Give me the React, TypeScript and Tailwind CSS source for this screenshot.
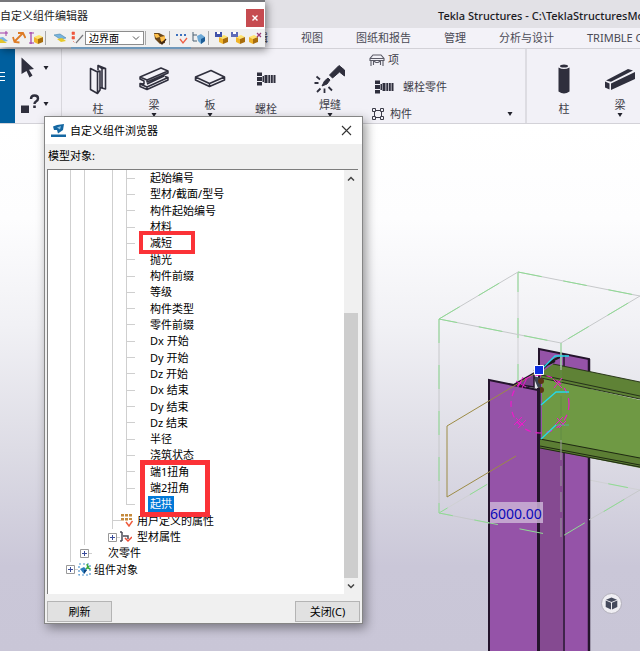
import React from "react";

const FONT = "font-['Noto_Sans','Noto_Sans_CJK_SC',sans-serif]";

/* ---------- ribbon icons ---------- */

const ColumnIcon = () => (
  <svg width="18" height="31" viewBox="0 0 18 31" fill="none" stroke="#2f2f3d" strokeWidth="1.600" strokeLinejoin="round">
    <path d="M1.500 4.500 L8.500 8 V29.500 L1.500 25.500 Z M8.500 8 L11 7 V26 L8.500 29.500 M9 6.500 V1.500 L16.500 4.500 V25 L11 23.500 M9 1.500 L13 4.500 L16.500 4.500 M13 4.500 V23.500" />
  </svg>
);

const BeamIcon = () => (
  <svg width="30" height="24" viewBox="0 0 30 24" fill="none" stroke="#2f2f3d" strokeWidth="1.500" strokeLinejoin="round">
    <path d="M1 10 L22 1 L29 4 L8 13 Z M1 10 V12 L5 14 V17 L1 16.500 V19.500 L8 22.500 L29 13 V10.500 L26 9.500 M8 13 V15 L29 6 V4 M8 22.500 V20 L29 10.500 M1 17 L8 20 M8 17 L25 9 V8" />
  </svg>
);

const PlateIcon = () => (
  <svg width="32" height="20" viewBox="0 0 32 20" fill="none" stroke="#2f2f3d" strokeWidth="1.600" strokeLinejoin="round">
    <path d="M1.500 8 L17 1.500 L30.500 8 L15.500 14.500 Z M1.500 8 V11 L15.500 17.500 L30.500 11 V8 M15.500 14.500 V17.500" />
  </svg>
);

const BoltIcon = () => (
  <svg width="20" height="14" viewBox="0 0 20 14" fill="#2f2f3d">
    <path d="M1 0.500h5v3.500H1z M1 5h5v4H1z M1 10h5v3.500H1z M6.500 4h1.500v6h-1.500z M8.500 3h3v8h-3z M12.300 3h2v8h-2z M15 3h1.800v8H15z M17.500 3h2v8h-2z" />
  </svg>
);

const WeldIcon = () => (
  <svg width="32" height="30" viewBox="0 0 32 30" fill="#2f2f3d" stroke="#2f2f3d">
    <path d="M15.500 11 L25 1.500 L30.500 6 V12 L25.500 8 L18.500 14 Z" strokeWidth="1" />
    <path d="M8 22 L10.500 17 L14 14 L16 16 L13 20 Z" strokeWidth="1" />
    <path d="M0.500 19 H4.500 M2.500 12.500 L6 15.500 M3 28 L6.500 24.500 M10.500 24.500 V29 M14.500 23 L18 26.500" strokeWidth="1.800" fill="none" />
  </svg>
);

const ItemIcon = () => (
  <svg width="16" height="13" viewBox="0 0 16 13" fill="none" stroke="#5a5a66" strokeWidth="1.100">
    <path d="M4 1 H12 L15 4.500 V6.500 H1 V4.500 Z M1 4.500 H15 M2 6.500 V12 M4.500 6.500 V11 M11.500 6.500 V11 M14 6.500 V12 M4.500 7 L7 8.500 H9 L11.500 7" />
  </svg>
);

const AssemblyIcon = () => (
  <svg width="12" height="12" viewBox="0 0 12 12" fill="none" stroke="#3c3c49">
    <path d="M.5 .5h3v3h-3z M8.500 .5h3v3h-3z M.5 8.500h3v3h-3z M8.500 8.500h3v3h-3z M4 2.500h4 M4 9.500h4 M2.500 4v4 M9.500 4v4" />
  </svg>
);

const ConcreteColumnIcon = () => (
  <svg width="14" height="32" viewBox="0 0 14 32" fill="#2f2f3d">
    <ellipse cx="7" cy="3" rx="4" ry="1.600" />
    <path d="M1.500 4.500 Q7 7.500 12.500 4.500 V28.500 Q7 32.500 1.500 28.500 Z" />
  </svg>
);

const ConcreteBeamIcon = () => (
  <svg width="32" height="24" viewBox="0 0 32 24" fill="#2f2f3d">
    <path d="M2 13.500 L24 2 L29 3.500 L7 14.800 Z M1 14.500 L5.500 16.500 V22.500 L1 20.500 Z M7 16.500 L31 5 V12 L7 23 Z" />
  </svg>
);

const Caret = () => (
  <svg width="6" height="4" viewBox="0 0 6 4" fill="#22222c">
    <path d="M0.500 0h5L3 4z" />
  </svg>
);

/* ---------- component editor toolbar icons ---------- */

const GoldCube = ({ x = 0 }: { x?: number }) => (
  <g transform={`translate(${x} 0)`}>
    <path d="M1 6 L6 4 L10 6 L5 8 Z" fill="#ffe36b" />
    <path d="M1 6 L5 8 V13 L1 11 Z" fill="#f0b429" />
    <path d="M5 8 L10 6 V11 L5 13 Z" fill="#a86d0c" />
  </g>
);

const Tool = ({ label, children }: { label: string; children: React.ReactNode }) => (
  <button type="button" aria-label={label} className="flex w-[17px] shrink-0 justify-center">
    <svg width="14" height="14" viewBox="0 0 14 14" fill="none">
      {children}
    </svg>
  </button>
);

const Separator = () => <span className="mx-px h-[14px] w-px shrink-0 bg-[#a8a8a8]" />;

function EditorToolbar() {
  return (
    <section className="absolute top-0 left-0 h-[47px] w-[265px] border-t-2 border-[#77777b] bg-white shadow-[2px_3px_8px_rgba(0,0,0,0.45)]">
      <header className="flex h-[27px] items-center justify-between pr-px">
        <h2 className="text-[11px] leading-4 text-[#222]">自定义组件编辑器</h2>
        <button type="button" aria-label="关闭编辑器" className="mt-1 flex h-[18px] w-[18px] items-center justify-center bg-[#c64b50]">
          <svg width="6" height="6" viewBox="0 0 6 6" stroke="#fff" strokeWidth="1.400">
            <path d="M0.500 0.500 L5.500 5.500 M5.500 0.500 L0.500 5.500" />
          </svg>
        </button>
      </header>
      <div className="flex h-[18px] items-center overflow-hidden bg-[#f0f0f0]">
        <div className="-ml-[7px] flex">
          <Tool label="固定平面">
            <path d="M0 2h13M11 0v5" stroke="#a03ca8" />
            <path d="M2 7l6-1 5 4-6 1z" fill="#78b4de" />
            <path d="M1 9l5-1 6 4H5z" fill="#e2c42d" />
          </Tool>
          <Tool label="添加距离">
            <path d="M2 11L11 2M1 6l1.500 5 5 .5M6 2h5l2.500 5" stroke="#dd7b25" strokeWidth="1.800" />
          </Tool>
          <Tool label="参考距离">
            <path d="M2 1v12M0 2h5M0 12h5" stroke="#a03ca8" strokeWidth="1.200" />
            <GoldCube x={4} />
          </Tool>
        </div>
        <Separator />
        <div className="ml-1 flex">
          <Tool label="工作平面">
            <path d="M1 4l6-1 6 4-6 1z" fill="#78b4de" stroke="#4586ad" strokeWidth=".6" />
            <path d="M4 8l5-1 4 3-5 1z" fill="#e7ca2a" />
          </Tool>
          <Tool label="自动绑定">
            <path d="M2 1h2.500v2.500H2zM2 5.500h2.500V8H2zM3 10l1.500 1.500" fill="#ef563c" stroke="#ef563c" strokeWidth=".6" />
            <path d="M6 12L13 4" stroke="#77777b" strokeWidth="1.200" />
          </Tool>
        </div>
        <div className="relative shrink-0">
          <select aria-label="平面类型" className="block h-[14px] w-[59px] appearance-none rounded-none border border-[#8d8d8d] bg-white pl-[3px] text-[10px] leading-3 text-black">
            <option>边界面</option>
          </select>
          <svg className="pointer-events-none absolute top-[5px] right-[4px]" width="8" height="5" viewBox="0 0 8 5" fill="none" stroke="#555">
            <path d="M1 0.500L4 3.500L7 0.500" />
          </svg>
        </div>
        <Separator />
        <div className="ml-[4px] flex">
          <Tool label="创建组件">
            <path d="M1 2h5l6 3v7l-5 1-5-5z" fill="#6b4718" />
            <path d="M1 3h4l2 3-4 1zM7 6l5-1v4l-4 2z" fill="#ffc04a" />
            <path d="M7 10l2 3 4-5" stroke="#3d2412" strokeWidth="1.300" />
          </Tool>
        </div>
        <Separator />
        <div className="ml-[2px] flex">
          <Tool label="显示变量">
            <path d="M1 3h2v2H1zM5 3h2v2H5zM9 3h2v2H9z" fill="#3c70bd" />
            <path d="M5 8l3 4 4-5" stroke="#ee6046" strokeWidth="1.300" />
          </Tool>
          <Tool label="组件浏览器">
            <path d="M1 1v9h4M1 4h4" stroke="#4b6172" />
            <path d="M5 5l4-2 4 3v4l-4 3-3-3z" fill="#6da9d6" />
            <path d="M9 8l4-2v4l-4 3z" fill="#1c5c96" />
          </Tool>
        </div>
        <Separator />
        <div className="ml-[2px] flex">
          <Tool label="保存组件">
            <GoldCube x={4} />
            <path d="M1 1h7v5H1z" fill="#4052a8" />
            <path d="M3 1h3v2H3z" fill="#fff" />
          </Tool>
          <Tool label="另存组件">
            <GoldCube x={4} />
            <path d="M0 1h7v5H0z" fill="#5e6cb8" />
            <path d="M2 1h3v2H2z" fill="#fff" />
          </Tool>
          <Tool label="关闭组件">
            <GoldCube />
            <path d="M9 2l4 4M13 2L9 6" stroke="#9a3a78" strokeWidth="1.200" />
          </Tool>
        </div>
      </div>
    </section>
  );
}

/* ---------- ribbon ---------- */

function RibbonButton({ label, icon, menu = false, wide = false }: { label: string; icon: React.ReactNode; menu?: boolean; wide?: boolean }) {
  return (
    <button type="button" className={`flex shrink-0 flex-col items-center pt-3 ${wide ? "w-[72px]" : "w-14"}`}>
      <span className="flex h-9 items-center">{icon}</span>
      <span className={`text-[11px] leading-4 text-[#3d3d48] ${menu ? "" : "pt-1"}`}>{label}</span>
      {menu && <Caret />}
    </button>
  );
}

function Ribbon() {
  return (
    <div className="flex h-[75px] shrink-0 overflow-hidden border-b border-[#d3d2d8] bg-[#f2f1f7]">
      <button type="button" aria-label="文件菜单" className="flex w-[15px] shrink-0 items-center bg-[#005f9e] pb-5">
        <svg width="5" height="10" viewBox="0 0 5 10" stroke="#fff">
          <path d="M0 1.500h5M0 5.500h5M0 9.500h5" />
        </svg>
      </button>
      <div className="flex w-[47px] shrink-0 flex-col gap-4 border-r border-[#d8d7dd] pt-2 pl-[6px]">
        <button type="button" aria-label="选择" className="flex items-center gap-2">
          <svg width="14" height="21" viewBox="0 0 14 21" fill="#2f2f3d">
            <path d="M0.500 0.500L13 12L8 12.800L11.500 18.500L8.500 20.500L5.500 14L0.500 17Z" />
          </svg>
          <Caret />
        </button>
        <button type="button" aria-label="查询" className="flex items-center gap-[3px]">
          <svg width="19" height="20" viewBox="0 0 19 20" fill="#2f2f3d">
            <path d="M0 11.500h8v7.500H0z" />
            <path d="M10 5Q10 1.500 13.500 1.500Q17 1.500 17 4.500Q17 6.500 15 7.500Q13.500 8.500 13.500 10" fill="none" stroke="#2f2f3d" strokeWidth="2.400" />
            <path d="M12.200 11.500h2.600v2.400h-2.600z" />
          </svg>
          <Caret />
        </button>
      </div>
      <div className="flex w-[465px] shrink-0 border-r-2 border-[#dddce2] pl-2">
        <RibbonButton label="柱" icon={<ColumnIcon />} />
        <RibbonButton label="梁" icon={<BeamIcon />} menu />
        <RibbonButton label="板" icon={<PlateIcon />} menu />
        <RibbonButton label="螺栓" icon={<BoltIcon />} />
        <RibbonButton label="焊缝" icon={<WeldIcon />} menu wide />
        <div className="flex flex-1 flex-col justify-between pt-[3px] pr-3 pb-px pl-[3px] text-[11px] leading-4 text-[#3d3d48]">
          <button type="button" className="flex items-center gap-[3px]">
            <ItemIcon />项
          </button>
          <button type="button" className="flex items-center gap-[9px] pl-[5px]">
            <BoltIcon />
            螺栓零件
          </button>
          <div className="flex items-center justify-between pl-[3px]">
            <button type="button" className="flex items-center gap-[6px]">
              <AssemblyIcon />
              构件
            </button>
            <button type="button" aria-label="更多">
              <Caret />
            </button>
          </div>
        </div>
      </div>
      <div className="flex pl-[9px]">
        <RibbonButton label="柱" icon={<ConcreteColumnIcon />} />
        <RibbonButton label="梁" icon={<ConcreteBeamIcon />} menu />
      </div>
    </div>
  );
}

/* ---------- 3D view ---------- */

function ModelView() {
  return (
    <main className="relative min-h-0 flex-1 overflow-hidden bg-[linear-gradient(#ffffff_0%,#fdfdfe_18%,#f1f1f5_38%,#dddce5_62%,#cac7d8_84%,#c9c6d7_100%)]">
      <svg className="block h-full w-full" viewBox="0 124 640 527" preserveAspectRatio="xMinYMin slice" fill="none">
        {/* work area box behind the model */}
        <path d="M518 272V466L439 513M518 466L640 490" stroke="#cfd0d3" />
        <path d="M518 272V466L439 513M518 466L640 490" stroke="#8fdc93" strokeDasharray="20 26" />

        {/* rear flange and web of the column */}
        <path d="M539 660V349L589 359V660Z" fill="#9553a8" stroke="#24142c" strokeWidth="2" />
        <path d="M540 440H563V651H540Z" fill="#854a91" />
        <path d="M564 354V651" stroke="#24142c" strokeWidth="1.500" />
        <path d="M589 359V651" stroke="#24142c" strokeWidth="2.500" />

        {/* beam */}
        <path d="M541 373L553 364L640 382V399L541 378Z" fill="#5f8236" />
        <path d="M553 364L640 382" stroke="#2c3a1c" strokeWidth="1.200" />
        <path d="M542 378L640 400V459L542 440Z" fill="#6f9944" />
        <path d="M541 375L640 396M541 378L640 399" stroke="#26331a" strokeWidth="1.200" />
        <path d="M540 439L640 458V468L540 448Z" fill="#5c7e34" />
        <path d="M540 439L640 458M540 446L640 465M540 448L640 467" stroke="#1f2a12" strokeWidth="1.200" />
        <path d="M533 376L541 378V439H538V388Z" fill="#3c4350" />
        <path d="M534 371L555 361M541 371Q548 362 560 357" stroke="#1a1a1a" strokeWidth="2" />
        <circle cx="541" cy="381" r="3" fill="#5a3514" />
        <circle cx="541" cy="390" r="3" fill="#5a3514" />

        {/* front flange */}
        <path d="M515 384L534 373V387Z" fill="#794489" stroke="#24142c" strokeWidth="1.500" />
        <path d="M489 380L538 390V651H489Z" fill="#9553a8" />
        <path d="M489 651V380L538 390" stroke="#24142c" strokeWidth="2" />
        <path d="M538.500 388V651" stroke="#24142c" strokeWidth="3" />

        {/* work area box in front of the model */}
        <path d="M439 319L518 272L640 296L561 343ZM439 319V513L489 523M561 343V370M589 520L640 490" stroke="#c6c8ca" />
        <path d="M439 319L518 272L640 296L561 343ZM439 319V513L561 537L640 490M561 343V370" stroke="#8fdc93" strokeDasharray="24 22" />
        <path d="M561 370V440" stroke="#628c45" strokeDasharray="20 6" />
        <path d="M561 440V537" stroke="#9a9a9c" strokeDasharray="20 6" />

        <path d="M534 374L447 426V497L516 456" stroke="#9c8b45" />
        <ellipse cx="540" cy="404" rx="29" ry="29" stroke="#ec1bcb" strokeDasharray="6 5" strokeWidth="1.200" />
        <path d="M516 381L526 387M518 387L523 377M522 388L527 378M554 388L562 378M553 379L562 388M514 425L522 417M518 428L526 420M516 418L524 426M555 425L563 417M559 428L566 421M557 418L565 426" stroke="#ec1bcb" />
        <path d="M541 370L555 356H569M541 405L556 392H569M541 439L556 425" stroke="#25d9e8" strokeWidth="1.300" />
        <path d="M556 425H569" stroke="#4fb98a" />
        <path d="M534.500 365.500h9v9h-9z" fill="#0d2fe0" stroke="#fff" />

        <path d="M490 502H543V523H490Z" fill="#cbb3d6" fillOpacity=".85" />
        <text x="490" y="519" fontSize="14" fill="#0808b8" fontFamily="Noto Sans, sans-serif">
          6000.00
        </text>
      </svg>
      <button type="button" aria-label="视图方向" className="absolute right-[18px] bottom-[37px] flex h-[21px] w-[21px] items-center justify-center rounded-full border border-[#b3b1bc] bg-[#efeef3]">
        <svg width="13" height="13" viewBox="0 0 13 13" fill="#454a5c">
          <path d="M6.500 0.500L12 2.700L6.500 5L1 2.700ZM0.700 3.500L6 5.800V12.500L0.700 10ZM12.300 3.500L7 5.800V12.500L12.300 10Z" />
        </svg>
      </button>
    </main>
  );
}

/* ---------- component browser ---------- */

const leaves = [
  "起始编号", "型材/截面/型号", "构件起始编号", "材料", "减短", "抛光", "构件前缀", "等级", "构件类型", "零件前缀",
  "Dx 开始", "Dy 开始", "Dz 开始", "Dx 结束", "Dy 结束", "Dz 结束", "半径", "浇筑状态", "端1扭角", "端2扭角", "起拱",
];

const Guide = () => <span className="w-[14px] shrink-0 self-stretch border-l border-[#cfcfcf]" />;
const Blank = () => <span className="w-[14px] shrink-0" />;

const Branch = ({ last = false }: { last?: boolean }) => (
  <span className="flex w-[9px] shrink-0 flex-col self-stretch">
    <span className="flex-1 border-b border-l border-[#cfcfcf]" />
    <span className={`flex-1 border-l ${last ? "border-transparent" : "border-[#cfcfcf]"}`} />
  </span>
);

const Expander = ({ name }: { name: string }) => (
  <span className="-ml-1 flex shrink-0 items-center">
    <button type="button" aria-label={`展开 ${name}`} className="block h-[9px] w-[9px]">
      <svg width="9" height="9" viewBox="0 0 9 9" fill="#fff">
        <path d="M.5 .5h8v8h-8z" stroke="#999" />
        <path d="M2 4.500h5M4.500 2v5" stroke="#3a4c9a" />
      </svg>
    </button>
    <span className="h-px w-[3px] bg-[#cfcfcf]" />
  </span>
);

const row = "flex min-h-0 flex-1 items-center whitespace-nowrap";

function Tree() {
  return (
    <ul className="flex h-[408px] flex-col pl-[22px] text-[11px] leading-4 text-black">
      {leaves.map((name, i) => (
        <li key={name} className={row}>
          <Guide />
          <Guide />
          <Blank />
          <Guide />
          <Branch last={i === leaves.length - 1} />
          <span className={i === leaves.length - 1 ? "ml-[13px] bg-[#0078d7] px-[2px] text-white" : "ml-[15px]"}>{name}</span>
        </li>
      ))}
      <li className={row}>
        <Guide />
        <Guide />
        <Blank />
        <Branch />
        <svg width="12" height="13" viewBox="0 0 12 13" fill="#c58a3c" className="mr-1 shrink-0">
          <path d="M0 0h3v2.500H0zM4 0h3v2.500H4zM8 0h3v2.500H8zM0 4h3v2.500H0zM4 4h3v2.500H4zM8 4h3v2H8z" />
          <path d="M5 8l3 4 3.500-5" fill="none" stroke="#ee5a3c" strokeWidth="1.500" />
        </svg>
        用户定义的属性
      </li>
      <li className={row}>
        <Guide />
        <Guide />
        <Blank />
        <Expander name="型材属性" />
        <svg width="12" height="12" viewBox="0 0 12 12" fill="none" className="mr-[5px] shrink-0">
          <path d="M2 1v9M0 1h2M0 10h2M3 5h5v3" stroke="#4d4d58" strokeWidth="1.500" />
          <path d="M5 7l3 3 4-4" stroke="#ee4a34" strokeWidth="1.500" />
        </svg>
        型材属性
      </li>
      <li className={row}>
        <Guide />
        <Expander name="次零件" />
        <span className="ml-4">次零件</span>
      </li>
      <li className={row}>
        <Expander name="组件对象" />
        <svg width="13" height="13" viewBox="0 0 13 13" fill="none" className="mr-[3px] shrink-0">
          <path d="M1 1h11v11H1z" stroke="#4f94cf" strokeWidth="1.200" strokeDasharray="2 2" />
          <path d="M2 6l4-2 3 3-3 4z" fill="#2d7fc0" />
          <path d="M6 7l3 0-3 4z" fill="#12447c" />
          <path d="M9 1l1 4 2.500 1M8 6l3-3" stroke="#3caa3c" strokeWidth="1.500" />
        </svg>
        组件对象
      </li>
    </ul>
  );
}

const dialogButton = "h-[21px] w-[65px] border border-[#b4b4b4] bg-[#e1e1e1] text-[11px] leading-4 text-black";

function ComponentBrowser() {
  return (
    <section role="dialog" aria-label="自定义组件浏览器" className="absolute top-[116px] left-[44px] w-[319px] border border-[#858585] bg-[#f0f0f0] shadow-[3px_4px_10px_rgba(0,0,0,0.4)]">
      <header className="flex h-[27px] items-center bg-white pr-[10px] pl-[6px]">
        <svg width="15" height="13" viewBox="0 0 15 13" fill="#1467a2">
          <path d="M0 10.500h15V13H0zM2 2.500L6 1l7-1-1 6-5 3.500-1-3.500H3z" />
          <path d="M6 3.500l4-1.500-1 3.500z" fill="#8fc1e2" />
        </svg>
        <h2 className="ml-1 flex-1 text-[11px] leading-4 text-black">自定义组件浏览器</h2>
        <button type="button" aria-label="关闭窗口">
          <svg width="11" height="11" viewBox="0 0 11 11" stroke="#333" strokeWidth="1.100">
            <path d="M1 1L10 10M10 1L1 10" />
          </svg>
        </button>
      </header>
      <p className="px-[3px] pt-1 pb-[5px] text-[11px] leading-4 text-black">模型对象:</p>
      <div className="relative mr-1 ml-[2px] flex h-[425px] border-t border-l border-[#7d7d7d] bg-white">
        <div className="min-w-0 flex-1">
          <Tree />
        </div>
        <div className="flex w-[14px] shrink-0 flex-col items-center bg-[#f0f0f0]">
          <button type="button" aria-label="向上滚动" className="flex h-4 w-full items-center justify-center">
            <svg width="8" height="5" viewBox="0 0 8 5" fill="none" stroke="#444" strokeWidth="1.500">
              <path d="M1 4.500L4 1.500L7 4.500" />
            </svg>
          </button>
          <span className="mt-[127px] w-full flex-1 bg-[#cdcdcd]" />
          <button type="button" aria-label="向下滚动" className="flex h-4 w-full items-center justify-center">
            <svg width="8" height="5" viewBox="0 0 8 5" fill="none" stroke="#444" strokeWidth="1.500">
              <path d="M1 0.500L4 3.500L7 0.500" />
            </svg>
          </button>
        </div>
        <span className="absolute top-[61px] left-[91px] h-[23px] w-[56px] border-4 border-[#fb3237]" />
        <span className="absolute top-[290px] left-[92px] h-[57px] w-[70px] border-[5px] border-[#fb3237]" />
      </div>
      <footer className="flex justify-between pt-[7px] pr-[2px] pb-px pl-[2px]">
        <button type="button" className={dialogButton}>刷新</button>
        <button type="button" className={dialogButton}>关闭(C)</button>
      </footer>
    </section>
  );
}

export default function App() {
  return (
    <div className={`relative flex h-screen flex-col overflow-hidden ${FONT}`}>
      <header className="flex h-7 shrink-0 items-center bg-[#e2e1e6] pl-[438px]">
        <h1 className="pt-1 text-[11px] leading-4 font-medium whitespace-nowrap text-[#1a1a1f]">Tekla Structures - C:\TeklaStructuresMod</h1>
      </header>
      <nav className="flex h-[21px] shrink-0 items-center gap-[33px] overflow-hidden border-b border-[#d3d2d8] bg-[#f3f2f8] pl-[246px] text-[11px] leading-4 whitespace-nowrap text-[#4a4a55]">
        <a href="#edit">编辑</a>
        <a href="#view">视图</a>
        <a href="#drawings">图纸和报告</a>
        <a href="#manage">管理</a>
        <a href="#analysis">分析与设计</a>
        <a href="#trimble">TRIMBLE C</a>
      </nav>
      <Ribbon />
      <ModelView />
      <span className="absolute top-[47px] left-[71px] z-10 h-[2px] w-[120px] bg-[#6f98ba]" />
      <EditorToolbar />
      <ComponentBrowser />
    </div>
  );
}
